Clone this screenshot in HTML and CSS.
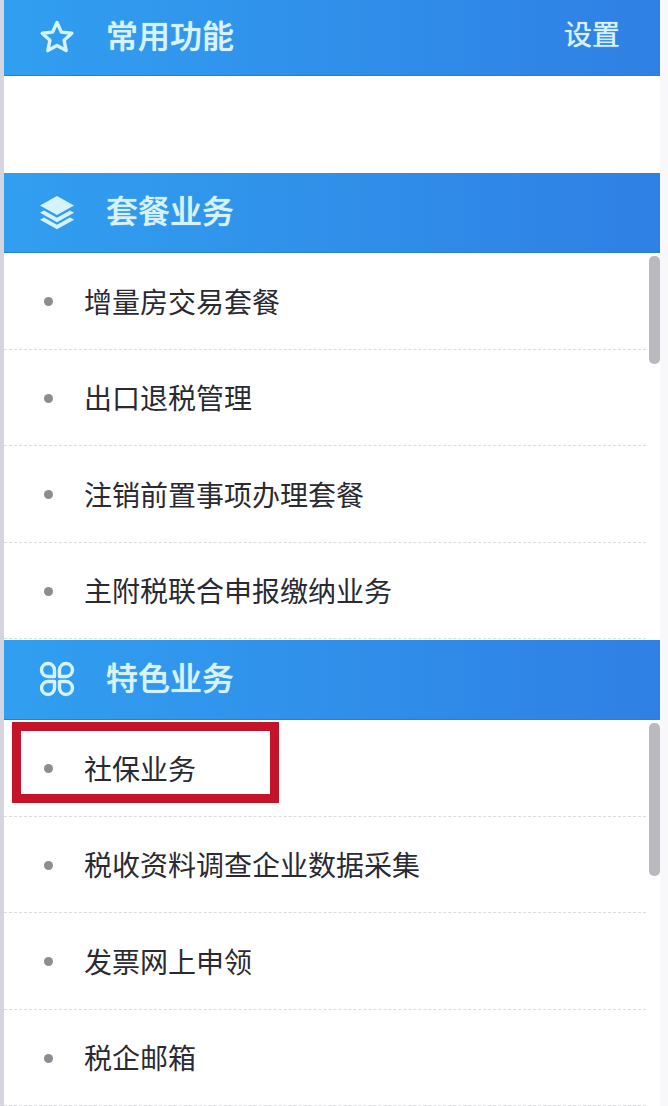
FILE: index.html
```html
<!DOCTYPE html>
<html lang="zh-CN">
<head>
    <meta charset="UTF-8">
    <meta name="viewport" content="width=device-width, initial-scale=1.0">
    <title>常用功能</title>
    <link rel="stylesheet" href="styles.css">
</head>
<body>
    <div class="panel">
        <div class="panel-head head-first">
            <svg class="head-icon" viewBox="0 0 36 36">
                <path d="M18 3.500l4.400 9.600 10.400 1.200-7.700 7 2.100 10.300L18 26.400 8.800 31.600l2.100-10.300-7.700-7 10.400-1.200z" fill="none" stroke="#d6f3fb" stroke-width="3.400" stroke-linejoin="round"/>
            </svg>
            <span class="head-title">常用功能</span>
            <span class="head-link">设置</span>
        </div>
        <div class="empty-block"></div>

        <div class="panel-head">
            <svg class="head-icon" viewBox="0 0 36 36">
                <path d="M18 2L35 11.500 18 21 1 11.500z" fill="#d6f3fb"/>
                <path d="M5 16.500l13 7.300 13-7.300 4 2.300-17 9.500-17-9.500z" fill="#d6f3fb"/>
                <path d="M5 23.500l13 7.300 13-7.300 4 2.300L18 35.300 1 25.800z" fill="#d6f3fb"/>
            </svg>
            <span class="head-title">套餐业务</span>
        </div>
        <div class="list-wrap">
            <ul class="menu-list">
                <li>增量房交易套餐</li>
                <li>出口退税管理</li>
                <li>注销前置事项办理套餐</li>
                <li>主附税联合申报缴纳业务</li>
            </ul>
            <div class="scroll-thumb thumb-short"></div>
        </div>

        <div class="panel-head">
            <svg class="head-icon" viewBox="0 0 36 36">
                <g fill="none" stroke="#d6f3fb" stroke-width="3.400" stroke-linejoin="round">
                    <path d="M15.500 15.500H9a6.500 6.500 0 1 1 6.500-6.500z"/>
                    <path d="M20.500 15.500H27a6.500 6.500 0 1 0-6.500-6.500z"/>
                    <path d="M15.500 20.500H9a6.500 6.500 0 1 0 6.500 6.500z"/>
                    <path d="M20.500 20.500H27a6.500 6.500 0 1 1-6.500 6.500z"/>
                </g>
            </svg>
            <span class="head-title">特色业务</span>
        </div>
        <div class="list-wrap">
            <ul class="menu-list">
                <li>社保业务</li>
                <li>税收资料调查企业数据采集</li>
                <li>发票网上申领</li>
                <li>税企邮箱</li>
            </ul>
            <div class="scroll-thumb thumb-long"></div>
            <div class="highlight-box"></div>
        </div>
    </div>
</body>
</html>
```

FILE: styles.css
```css
* {
    box-sizing: border-box;
}

html, body {
    height: 100%;
}

body {
    margin: 0;
    overflow: hidden;
    background: #f8f8fb;
    font-family: "Liberation Sans", "Noto Sans CJK SC", sans-serif;
}

.panel {
    width: 660px;
    height: 1106px;
    border-left: 4px solid #d5d5e0;
    background: #fff;
}

.panel-head {
    display: flex;
    align-items: center;
    height: 80px;
    padding-left: 35px;
    padding-bottom: 2px;
    border-bottom: 1px solid #2b7fd0;
    background: linear-gradient(to right, #319ff0, #2f80e4);
    color: #d6f3fb;
    text-shadow: 0 0 1px #d6f3fb;
}

.head-first {
    height: 76px;
}

.head-icon {
    width: 36px;
    height: 36px;
    flex-shrink: 0;
}

.head-title {
    margin-left: 31px;
    padding-bottom: 6px;
    font-size: 32px;
    font-weight: 500;
}

.head-link {
    margin-left: auto;
    margin-right: 40px;
    padding-bottom: 8px;
    font-size: 28px;
}

.empty-block {
    height: 97px;
}

.list-wrap {
    position: relative;
    height: 387px;
}

.menu-list {
    margin: 0;
    padding: 0;
    list-style: none;
}

.menu-list li {
    display: flex;
    align-items: center;
    height: 96.500px;
    margin-right: 14px;
    padding-left: 80px;
    border-bottom: 1px dashed #dcdce0;
    color: #2a2a33;
    font-size: 28px;
    position: relative;
}

.menu-list li::before {
    content: "";
    position: absolute;
    left: 40px;
    top: 44px;
    width: 9px;
    height: 9px;
    border-radius: 50%;
    background: #8a8d92;
}

.scroll-thumb {
    position: absolute;
    right: 0;
    top: 3px;
    width: 11px;
    border-radius: 5px;
    background: #b9b9bf;
}

.thumb-short {
    height: 108px;
}

.thumb-long {
    height: 153px;
}

.highlight-box {
    position: absolute;
    left: 8px;
    top: 2px;
    width: 267px;
    height: 81px;
    border: 9px solid #c5142a;
}
```
